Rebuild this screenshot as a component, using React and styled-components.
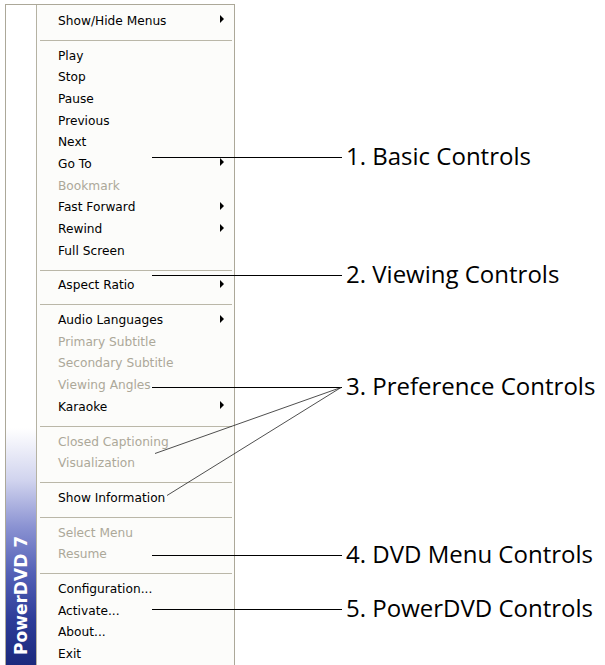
import React from "react";
import styled, { createGlobalStyle } from "styled-components";

const GlobalStyle = createGlobalStyle`
  html, body {
    margin: 0;
    padding: 0;
    background: #ffffff;
  }
  body {
    font-family: "DejaVu Sans", sans-serif;
  }
`;

const groups = [
  [{ label: "Show/Hide Menus", sub: true }],
  [
    { label: "Play" },
    { label: "Stop" },
    { label: "Pause" },
    { label: "Previous" },
    { label: "Next" },
    { label: "Go To", sub: true },
    { label: "Bookmark", disabled: true },
    { label: "Fast Forward", sub: true },
    { label: "Rewind", sub: true },
    { label: "Full Screen" },
  ],
  [{ label: "Aspect Ratio", sub: true }],
  [
    { label: "Audio Languages", sub: true },
    { label: "Primary Subtitle", disabled: true },
    { label: "Secondary Subtitle", disabled: true },
    { label: "Viewing Angles", disabled: true },
    { label: "Karaoke", sub: true },
  ],
  [
    { label: "Closed Captioning", disabled: true },
    { label: "Visualization", disabled: true },
  ],
  [{ label: "Show Information" }],
  [
    { label: "Select Menu", disabled: true },
    { label: "Resume", disabled: true },
  ],
  [
    { label: "Configuration..." },
    { label: "Activate..." },
    { label: "About..." },
    { label: "Exit" },
  ],
];

const callouts = [
  { y: 157, text: "1. Basic Controls" },
  { y: 275, text: "2. Viewing Controls" },
  { y: 387, text: "3. Preference Controls" },
  { y: 555, text: "4. DVD Menu Controls" },
  { y: 609, text: "5. PowerDVD Controls" },
];

const App = () => {
  return (
    <>
      <GlobalStyle />
      <Figure>
        <Menu>
          <Sidebar>
            <Brand>PowerDVD 7</Brand>
          </Sidebar>
          <Items>
            {groups.map((group, gi) => (
              <React.Fragment key={gi}>
                {gi > 0 && <Separator />}
                {group.map((item) => (
                  <Item key={item.label} $disabled={item.disabled}>
                    <span>{item.label}</span>
                    {item.sub && <Arrow />}
                  </Item>
                ))}
              </React.Fragment>
            ))}
          </Items>
        </Menu>

        <Lines width="605" height="665" viewBox="0 0 605 665">
          {callouts.map((c) => (
            <line key={c.y} x1="152" y1={c.y + 0.5} x2="342" y2={c.y + 0.5} stroke="#000" strokeWidth="1" />
          ))}
          <line x1="341" y1="387.5" x2="155" y2="453.5" stroke="#222" strokeWidth="0.8" />
          <line x1="341" y1="387.5" x2="167" y2="495.5" stroke="#222" strokeWidth="0.8" />
        </Lines>

        {callouts.map((c) => (
          <Label key={c.text} $y={c.y}>
            {c.text}
          </Label>
        ))}
      </Figure>
    </>
  );
};

const Figure = styled.div`
  position: relative;
  width: 605px;
  height: 665px;
  overflow: hidden;
  background: #ffffff;
`;

const Menu = styled.div`
  display: flex;
  width: 228px;
  height: 661px;
  margin: 4px 0 0 5px;
  border: 1px solid #aca899;
  border-bottom: none;
  background: #fcfcfa;
`;

const Sidebar = styled.div`
  width: 30px;
  display: flex;
  flex-direction: column;
  justify-content: flex-end;
  align-items: center;
  padding-bottom: 11px;
  box-sizing: border-box;
  background: linear-gradient(
    180deg,
    #ffffff 0%,
    #ffffff 64%,
    #d0d3ee 72%,
    #8a92d2 79%,
    #5360b6 86%,
    #2d3c98 93%,
    #1a297c 100%
  );
`;

const Brand = styled.div`
  writing-mode: vertical-rl;
  transform: rotate(180deg);
  color: #ffffff;
  font-family: "DejaVu Sans", sans-serif;
  font-weight: bold;
  font-size: 17px;
  line-height: 1;
  white-space: nowrap;
`;

const Items = styled.div`
  flex: 1;
  border-left: 1px solid #b5b2a3;
  padding-top: 5px;
`;

const Item = styled.div`
  display: flex;
  align-items: center;
  justify-content: space-between;
  height: 21.7px;
  padding: 0 10px 0 21px;
  font-family: "DejaVu Sans", sans-serif;
  font-size: 12.2px;
  color: ${(p) => (p.$disabled ? "#aca899" : "#000000")};
  white-space: nowrap;
`;

const Arrow = styled.i`
  width: 0;
  height: 0;
  margin-top: -3px;
  border-top: 4px solid transparent;
  border-bottom: 4px solid transparent;
  border-left: 4px solid #000000;
`;

const Separator = styled.div`
  height: 13px;
  margin: 0 2px 0 3px;
  display: flex;
  align-items: flex-start;
  padding-top: 8px;
  box-sizing: border-box;

  &::after {
    content: "";
    flex: 1;
    height: 1px;
    background: #bab7a8;
  }
`;

const Lines = styled.svg`
  position: absolute;
  left: 0;
  top: 0;
  pointer-events: none;
`;

const Label = styled.div`
  position: absolute;
  left: 346px;
  top: ${(p) => p.$y - 13}px;
  font-family: "Open Sans", sans-serif;
  font-size: 24px;
  line-height: 24px;
  color: #000000;
  white-space: nowrap;
`;

export default App;
